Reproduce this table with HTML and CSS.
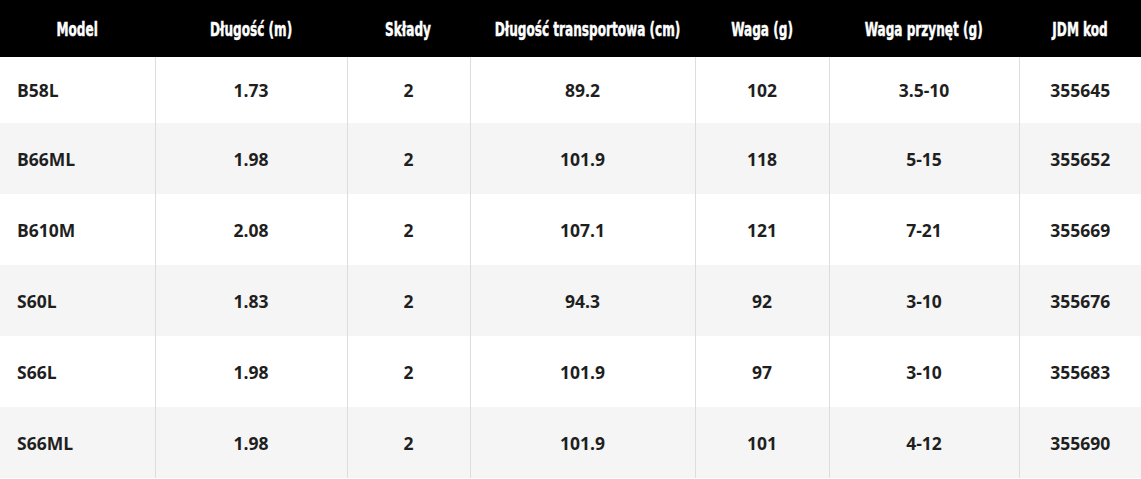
FILE: index.html
```html
<!DOCTYPE html>
<html lang="pl">
<head>
<meta charset="utf-8">
<title>Tabela</title>
<link rel="stylesheet" href="styles.css">
</head>
<body>
<table class="spec">
  <colgroup>
    <col class="c1"><col class="c2"><col class="c3"><col class="c4"><col class="c5"><col class="c6"><col class="c7">
  </colgroup>
  <thead>
    <tr>
      <th><span>Model</span></th>
      <th><span>Długość (m)</span></th>
      <th><span>Składy</span></th>
      <th><span>Długość transportowa (cm)</span></th>
      <th><span>Waga (g)</span></th>
      <th><span>Waga przynęt (g)</span></th>
      <th><span>JDM kod</span></th>
    </tr>
  </thead>
  <tbody>
    <tr class="first"><td class="model">B58L</td><td>1.73</td><td>2</td><td>89.2</td><td>102</td><td>3.5-10</td><td>355645</td></tr>
    <tr><td class="model">B66ML</td><td>1.98</td><td>2</td><td>101.9</td><td>118</td><td>5-15</td><td>355652</td></tr>
    <tr><td class="model">B610M</td><td>2.08</td><td>2</td><td>107.1</td><td>121</td><td>7-21</td><td>355669</td></tr>
    <tr><td class="model">S60L</td><td>1.83</td><td>2</td><td>94.3</td><td>92</td><td>3-10</td><td>355676</td></tr>
    <tr><td class="model">S66L</td><td>1.98</td><td>2</td><td>101.9</td><td>97</td><td>3-10</td><td>355683</td></tr>
    <tr><td class="model">S66ML</td><td>1.98</td><td>2</td><td>101.9</td><td>101</td><td>4-12</td><td>355690</td></tr>
  </tbody>
</table>
</body>
</html>
```

FILE: styles.css
```css
html, body {
  margin: 0;
  padding: 0;
  background: #ffffff;
}

.spec {
  width: 1141px;
  border-collapse: collapse;
  table-layout: fixed;
  font-family: "Open Sans", "Liberation Sans", sans-serif;
}

.c1 { width: 155px; }
.c2 { width: 192px; }
.c3 { width: 123px; }
.c4 { width: 225px; }
.c5 { width: 134px; }
.c6 { width: 190px; }
.c7 { width: 122px; }

.spec thead tr {
  background: #000000;
  height: 57px;
}

.spec th {
  padding: 0;
  color: #ffffff;
  text-align: center;
  vertical-align: middle;
  font-family: "DejaVu Sans Condensed", "Liberation Sans", sans-serif;
  font-weight: 700;
  font-size: 17px;
  white-space: nowrap;
  -webkit-text-stroke: 0.4px #ffffff;
}

.spec th span {
  display: inline-block;
  transform: scale(0.79, 1.16);
}

.spec tbody tr {
  height: 71px;
}

.spec tbody tr.first {
  height: 66px;
}

.spec tbody tr:nth-child(even) {
  background: #f5f5f5;
}

.spec td {
  padding: 0;
  text-align: center;
  vertical-align: middle;
  color: #1f1f1f;
  font-weight: 700;
  font-size: 17.5px;
  border-left: 1px solid #dddddd;
}

.spec td:first-child {
  border-left: none;
}

.spec td.model {
  text-align: left;
  padding-left: 17px;
}
```
